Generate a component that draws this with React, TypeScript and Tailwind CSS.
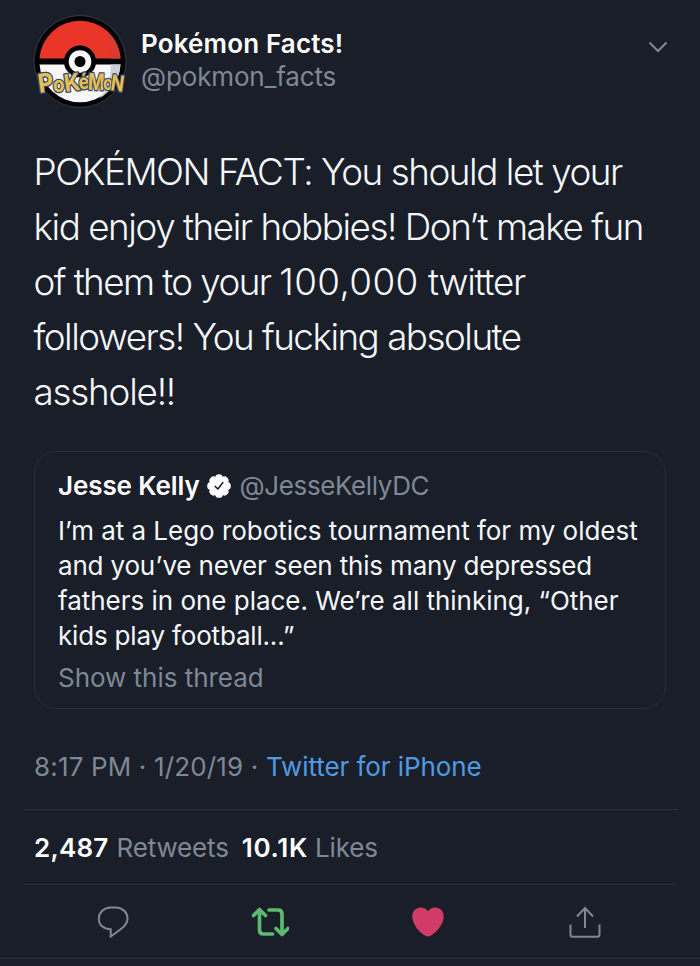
import React from "react";

function Avatar() {
  const letters = [
    { c: "P", x: 5, y: 78, s: 26, w: 15.5, r: -8 },
    { c: "o", x: 20, y: 78, s: 22, w: 11.5, r: 0 },
    { c: "K", x: 31, y: 77, s: 24, w: 16, r: -8 },
    { c: "é", x: 45.5, y: 75, s: 21, w: 10.5, r: -6 },
    { c: "M", x: 55, y: 76, s: 23, w: 16.5, r: 2 },
    { c: "o", x: 70, y: 76, s: 20, w: 10, r: 0 },
    { c: "N", x: 78, y: 77, s: 22, w: 13, r: 8 },
  ];
  return (
    <svg viewBox="0 0 94 94" className="h-[94px] w-[94px] shrink-0 overflow-visible">
      <circle cx="47" cy="47.5" r="46" fill="#030305" stroke="#4b4e55" strokeWidth=".7" />
      <path d="M6.500 44.500a40.600 40.600 0 0 1 81 0z" fill="#ea3629" />
      <path d="M70 14a40.600 40.600 0 0 1 17.500 30.500H78C79 34 77 23 70 14z" fill="#d63c31" />
      <path d="M6.500 50.500a40.600 40.600 0 0 0 81 0z" fill="#f7f7f8" />
      <path d="M78 50.500h9.500A40.500 40.500 0 0 1 66 84.500C74 77 77.500 65 78 50.500z" fill="#cdd1d5" />
      <circle cx="47" cy="47.500" r="16" fill="#030305" />
      <circle cx="47" cy="47.500" r="11.300" fill="#f7f7f8" />
      <circle cx="47" cy="47.500" r="5.500" fill="#030305" />
      {letters.map((l, i) => (
        <text
          key={i}
          x={l.x}
          y={l.y}
          fontSize={l.s}
          textLength={l.w}
          lengthAdjust="spacingAndGlyphs"
          transform={`rotate(${l.r} ${l.x + l.w / 2} ${l.y - 8})`}
          fill="#e9c04b"
          stroke="#34466f"
          strokeWidth="2.600"
          strokeLinejoin="round"
          paintOrder="stroke"
          className="font-['Inter',sans-serif] font-bold"
        >
          {l.c}
        </text>
      ))}
    </svg>
  );
}

function Verified() {
  const petals = [0, 45, 90, 135, 180, 225, 270, 315];
  return (
    <svg viewBox="0 0 24 24" className="ml-[7px] h-6 w-6 shrink-0">
      <circle cx="12" cy="12" r="9.500" fill="#fff" />
      {petals.map((a) => (
        <circle key={a} cx="12" cy="4.100" r="3.900" fill="#fff" transform={`rotate(${a} 12 12)`} />
      ))}
      <path d="M8.200 12.400l2.700 2.600 5-6.500" fill="none" stroke="#1a1e29" strokeWidth="1.500" strokeLinecap="round" strokeLinejoin="round" />
    </svg>
  );
}

export default function App() {
  return (
    <main className="flex h-[966px] w-[700px] flex-col overflow-hidden bg-[#1a1e29] font-['Inter',sans-serif] text-[#f5f8fa]">
      <header className="flex h-[144px] shrink-0 items-start pt-[14px] pr-[32px] pl-[33px]">
        <Avatar />
        <div className="ml-[14px] pt-[13px] text-[26px] leading-[33px] whitespace-nowrap">
          <h1 className="font-semibold tracking-[0.15px] text-white">Pokémon Facts!</h1>
          <p className="tracking-[-0.15px] text-[#7e8995]">@pokmon_facts</p>
        </div>
        <svg viewBox="0 0 20 12" className="mt-[27px] ml-auto h-3 w-5" fill="none" stroke="#7e8995" strokeWidth="2">
          <path d="M1.500 1.500l8.500 8.500 8.500-8.500" />
        </svg>
      </header>

      <section className="pl-[33.500px] text-[36.800px] leading-[55px] font-light whitespace-nowrap">
        <p className="tracking-[-1.45px]">POKÉMON FACT: You should let your</p>
        <p className="tracking-[-1.45px]">kid enjoy their hobbies! Don’t make fun</p>
        <p className="tracking-[-1.2px]">
          <span className="tracking-[-1.57px]">of them to your </span>
          <span className="tracking-[0.4px]">100,000</span> twitter
        </p>
        <p className="tracking-[-1.5px]">followers! You fucking absolute</p>
        <p className="tracking-[-1.2px]">asshole!!</p>
      </section>

      <article className="mt-[32px] ml-[34px] h-[258px] w-[632px] shrink-0 rounded-[22px] border border-[#282c37] pt-[16px] pl-[23px] text-[26px] whitespace-nowrap">
        <div className="flex h-[35px] items-center leading-[35px]">
          <span className="font-semibold tracking-[-0.1px] text-white">Jesse Kelly</span>
          <Verified />
          <span className="ml-[9px] tracking-[-0.38px] text-[#7e8995]">@JesseKellyDC</span>
        </div>
        <div className="mt-[10px] leading-[35px]">
          <p className="tracking-[-0.03px]">I’m at a Lego robotics tournament for my oldest</p>
          <p className="tracking-[-0.17px]">and you’ve never seen this many depressed</p>
          <p className="tracking-[-0.02px]">fathers in one place. We’re all thinking, “Other</p>
          <p className="tracking-[-0.18px]">kids play football...”</p>
        </div>
        <p className="mt-[7px] leading-[35px] tracking-[-0.03px] text-[#7e8995]">Show this thread</p>
      </article>

      <div className="mt-[40px] h-[60px] shrink-0 pl-[34px] text-[26px] leading-[35px] whitespace-nowrap text-[#7e8995]">
        <span className="tracking-[0.16px]">8:17 PM · 1/20/19 · </span>
        <span className="tracking-[-0.08px] text-[#4f9be3]">Twitter for iPhone</span>
      </div>

      <div className="mr-[22px] ml-[24px] flex h-[75px] shrink-0 items-center border-t border-[#2c303a] pl-[10px] text-[26px] whitespace-nowrap text-[#7e8995]">
        <strong className="font-semibold tracking-[0.2px] text-white">2,487</strong>
        <span className="ml-[8px] tracking-[-0.15px]">Retweets</span>
        <strong className="ml-[13px] font-semibold tracking-[0.7px] text-white">10.1K</strong>
        <span className="ml-[7px] tracking-[-0.1px]">Likes</span>
      </div>

      <div className="mx-[24px] flex h-[74px] shrink-0 items-center border-t border-[#2c303a]">
        <svg viewBox="0 0 32 32" className="ml-[73px] h-8 w-8" fill="none" stroke="#7e8995" strokeWidth="2">
          <path d="M13.500 1.500h5.500C25.500 1.500 30.500 6.500 30.500 12.500c0 4.500-2.500 7.500-6.500 10.500L13.700 30.500v-7.300C6.500 23.300 1.800 19 1.800 12.700 1.800 6.500 7 1.500 13.500 1.500z" />
        </svg>
        <svg viewBox="0 0 38 30" className="ml-[122px] h-[30px] w-[38px]" fill="none" stroke="#5cb970" strokeWidth="3.700" strokeLinecap="round" strokeLinejoin="round">
          <path d="M2.500 8.500L8.500 2.500l6 6M8.500 3v20q0 4 4 4h9M18 3h9q4 0 4 4v20M25 21.500l6 6 6-6" />
        </svg>
        <svg viewBox="0 0 32 30" className="ml-[123px] h-[30px] w-8" fill="#d23b66">
          <path d="M16 29.500C11 29 .300 19 .300 9.500.300 4 4 .500 8.500.500c3.500 0 6 1.500 7.500 4C17.500 2 20 .500 23.500.500 28 .500 31.700 4 31.700 9.500 31.700 19 21 29 16 29.500z" />
        </svg>
        <svg viewBox="0 0 32 32" className="ml-[125px] h-8 w-8" fill="none" stroke="#7e8995" strokeWidth="2">
          <path d="M16 22V2M8 10.500l8-8.500 8 8.500M1.500 18.500v10.300q0 2 2 2h25q2 0 2-2V18.500" />
        </svg>
      </div>
      <div className="h-px w-full shrink-0 bg-[#2c303a]" />
    </main>
  );
}
